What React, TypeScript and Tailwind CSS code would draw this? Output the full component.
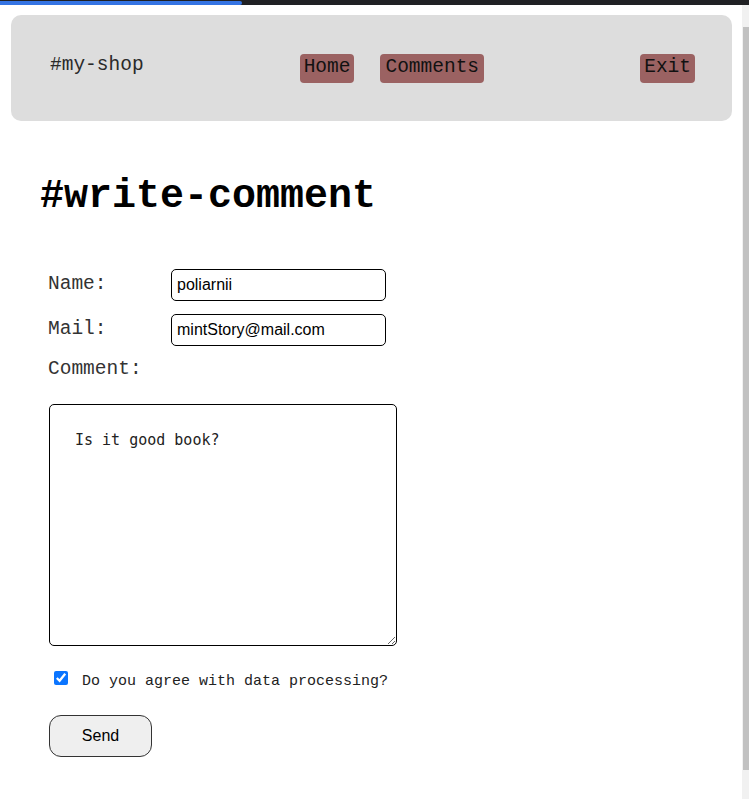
import React, { useState } from 'react';

export default function App() {
  const [name, setName] = useState('poliarnii');
  const [mail, setMail] = useState('mintStory@mail.com');
  const [comment, setComment] = useState('Is it good book?');
  const [agree, setAgree] = useState(true);

  const mono = "font-['Liberation_Mono','Courier_New',monospace]";

  return (
    <div className="h-[799px] flex flex-col bg-white overflow-hidden">
      {/* Page load bar */}
      <div className="h-[5px] bg-[#202124] flex items-end">
        <div className="h-[4px] w-[242px] bg-[#3574e3] rounded-r-full" />
      </div>

      <div className="flex flex-1 min-h-0">
        <main className="flex-1 min-w-0">
          {/* Header */}
          <header className={`mt-[10px] ml-[11px] mr-[10px] h-[106px] bg-[#dddddd] rounded-[10px] flex items-center pl-[39px] pr-[37px] ${mono}`}>
            <div className="text-[19.5px] text-[#2a2a2a] mb-[5px]">#my-shop</div>
            <nav className="flex flex-1 items-center">
              <a className="ml-[156px] px-[4px] h-[29px] flex items-center bg-[#9b6262] rounded-[4px] text-[19.5px] text-[#111]">Home</a>
              <a className="ml-[26px] px-[5px] h-[29px] flex items-center bg-[#9b6262] rounded-[4px] text-[19.5px] text-[#111]">Comments</a>
              <a className="ml-auto px-[4px] h-[29px] flex items-center bg-[#9b6262] rounded-[4px] text-[19.5px] text-[#111]">Exit</a>
            </nav>
          </header>

          {/* Form */}
          <section className="pl-[40px] pt-[52px]">
            <h1 className={`${mono} font-bold text-[40px] leading-[48px] text-black`}>#write-comment</h1>

            <form className="mt-[48px] pl-[8px]" onSubmit={(e) => e.preventDefault()}>
              <div className="flex items-center h-[32px]">
                <label className={`${mono} text-[19.5px] text-[#333] w-[123px]`}>Name:</label>
                <input
                  value={name}
                  onChange={(e) => setName(e.target.value)}
                  className="w-[215px] h-[32px] border border-black rounded-[5px] px-[5px] text-[16px] text-black font-['Liberation_Sans',Arial,sans-serif] outline-none"
                />
              </div>
              <div className="flex items-center h-[32px] mt-[13px]">
                <label className={`${mono} text-[19.5px] text-[#333] w-[123px]`}>Mail:</label>
                <input
                  value={mail}
                  onChange={(e) => setMail(e.target.value)}
                  className="w-[215px] h-[32px] border border-black rounded-[5px] px-[5px] text-[16px] text-black font-['Liberation_Sans',Arial,sans-serif] outline-none"
                />
              </div>
              <div className={`${mono} text-[19.5px] text-[#333] mt-[10px] leading-[26px]`}>Comment:</div>

              <textarea
                value={comment}
                onChange={(e) => setComment(e.target.value)}
                className="block mt-[22px] ml-[1px] w-[348px] h-[242px] border border-black rounded-[5px] pt-[25px] px-[25px] text-[15px] leading-[20px] text-[#222] font-['DejaVu_Sans_Mono',monospace] outline-none resize"
              />

              <label className="flex items-center mt-[17px] ml-[6px] cursor-pointer">
                <input
                  type="checkbox"
                  checked={agree}
                  onChange={(e) => setAgree(e.target.checked)}
                  className="w-[14px] h-[14px] accent-[#0b75ff]"
                />
                <span className={`${mono} text-[15px] text-[#222] ml-[14px] mt-[8px]`}>Do you agree with data processing?</span>
              </label>

              <button
                type="submit"
                className="mt-[21px] ml-[1px] w-[103px] h-[42px] bg-[#efefef] border border-[#333] rounded-[12px] text-[16px] text-black font-['Liberation_Sans',Arial,sans-serif]"
              >
                Send
              </button>
            </form>
          </section>
        </main>

        {/* Scrollbar */}
        <div className="w-[7px] bg-[#f1f1f1] flex flex-col items-end">
          <div className="h-[22px]" />
          <div className="w-[6px] h-[743px] bg-[#c1c1c1]" />
        </div>
      </div>
    </div>
  );
}
